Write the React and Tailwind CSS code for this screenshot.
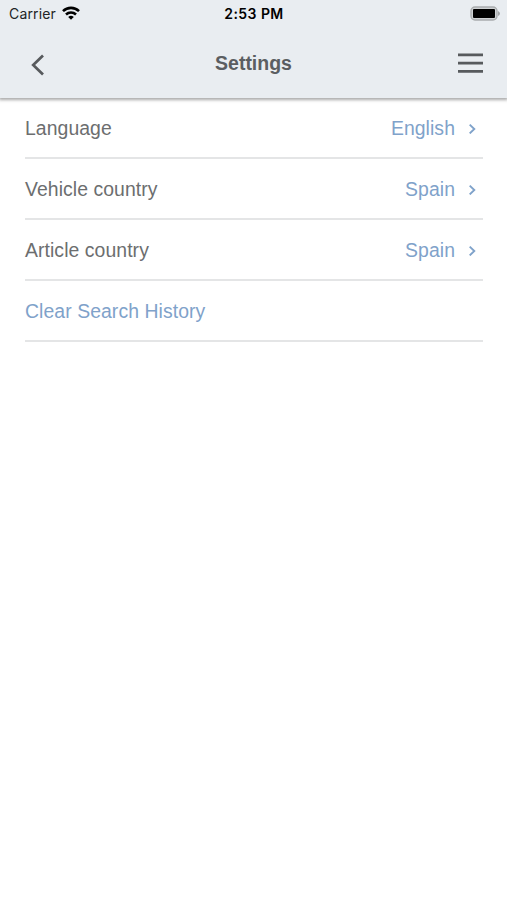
const rows = [
  { label: "Language", value: "English" },
  { label: "Vehicle country", value: "Spain" },
  { label: "Article country", value: "Spain" },
];

function StatusBar() {
  return (
    <div className="grid h-7 grid-cols-3 items-center pl-[9px] pr-[7px] font-['Inter',sans-serif] text-black">
      <div className="flex items-center gap-[6px]">
        <span className="text-[14px] leading-none tracking-[0.15px] text-[#222426]">Carrier</span>
        <svg className="-mt-[2px] h-[14px] w-[18px]" viewBox="0 0 18 14" fill="none" stroke="currentColor" strokeWidth="2.6">
          <path d="M1 5.1a11.6 11.6 0 0 1 16 0" />
          <path d="M4 8.5a7.3 7.3 0 0 1 10 0" />
          <path d="M9 13.8 6.2 11a4 4 0 0 1 5.6 0z" fill="currentColor" stroke="none" />
        </svg>
      </div>
      <span className="-ml-[1px] text-center text-[14px] font-semibold leading-none tracking-[0.45px]">2:53 PM</span>
      <svg className="-mt-[2px] h-[15px] w-[30px] justify-self-end" viewBox="0 0 30 15">
        <rect x="1" y="1" width="26" height="13" rx="4" fill="#cfd2d4" stroke="#a9acae" strokeWidth="1.4" />
        <rect x="3" y="3" width="22" height="9" rx="1" fill="#000" />
        <path d="M28 5v5q2-1 2-2.5t-2-2.5z" fill="#a2a5a7" />
      </svg>
    </div>
  );
}

function Header() {
  return (
    <header className="relative h-[98px] bg-[#e9edf1] shadow-[0_1px_3px_1px_rgba(0,0,0,0.34)]">
      <StatusBar />
      <div className="grid h-[70px] grid-cols-[1fr_auto_1fr] items-center pl-[30px] pr-[30px]">
        <button aria-label="Back" className="w-[26px] text-[#575a5d]">
          <svg className="mt-[3px] h-[22px] w-[15px]" viewBox="0 0 15 22" fill="none" stroke="currentColor" strokeWidth="2.7">
            <path d="M13 1.5 3.2 11 13 20.5" />
          </svg>
        </button>
        <h1 className="text-[19.5px] font-bold leading-[22px] text-[#5b5e61]">Settings</h1>
        <button aria-label="Menu" className="-mr-[6px] justify-self-end text-[#575a5d]">
          <svg className="h-[22px] w-[25px]" viewBox="0 0 25 22" stroke="currentColor" strokeWidth="2.8">
            <path d="M0 2.9h25M0 11.1h25M0 19.3h25" />
          </svg>
        </button>
      </div>
    </header>
  );
}

export default function App() {
  return (
    <div className="min-h-screen bg-white font-['Liberation_Sans',Arial,sans-serif]">
      <Header />
      <main className="pl-[25px] pr-6 text-[19.4px] leading-[22px] tracking-[0.07px]">
        {rows.map((row) => (
          <div key={row.label} className="flex h-[61px] items-center justify-between border-b-2 border-[#e4e5e6] text-[#6c6e6f]">
            <span>{row.label}</span>
            <span className="flex items-center text-[#7fa2ca]">
              {row.value}
              <svg className="ml-[13px] mr-[7px] mt-px h-[11px] w-[8px]" viewBox="0 0 8 11" fill="none" stroke="currentColor" strokeWidth="1.9">
                <path d="M1.7 1.6 6.3 6 1.7 10.4" />
              </svg>
            </span>
          </div>
        ))}
        <div className="flex h-[61px] items-center border-b-2 border-[#e4e5e6] text-[#7fa2ca]">Clear Search History</div>
      </main>
    </div>
  );
}
